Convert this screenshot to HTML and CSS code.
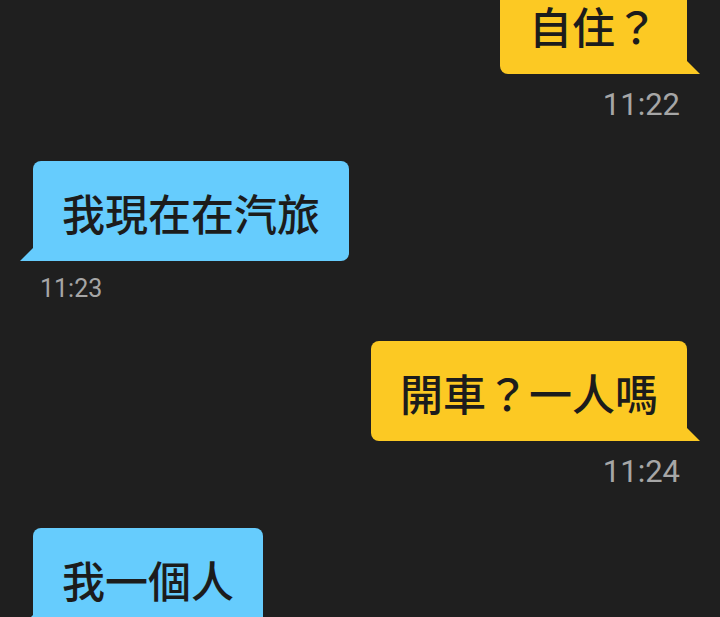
FILE: index.html
```html
<!DOCTYPE html>
<html lang="zh-Hant">
<head>
  <meta charset="UTF-8" />
  <meta name="viewport" content="width=device-width, initial-scale=1.0"/>
  <title>聊天</title>
  <link rel="stylesheet" href="styles.css">
</head>
<body>
  <div class="chat">
    <div class="msg me">
      <div class="bubble">自住？</div>
      <div class="time">11:22</div>
    </div>
    <div class="msg them">
      <div class="bubble">我現在在汽旅</div>
      <div class="time">11:23</div>
    </div>
    <div class="msg me">
      <div class="bubble">開車？一人嗎</div>
      <div class="time">11:24</div>
    </div>
    <div class="msg them">
      <div class="bubble">我一個人</div>
    </div>
  </div>
</body>
</html>
```

FILE: styles.css
```css
html, body { margin: 0; background: #1f1f1f; }
body { height: 617px; overflow: hidden; }

.chat {
  display: flex;
  flex-direction: column;
  padding: 0 33px;
  margin-top: -26px;
}

.msg { display: flex; flex-direction: column; margin-bottom: 41px; }
.msg.me { align-items: flex-end; }
.msg.them { align-items: flex-start; margin-bottom: 40px; }

.bubble {
  position: relative;
  font-family: "Noto Sans CJK TC", "Noto Sans", sans-serif;
  font-size: 43px;
  font-weight: 500;
  line-height: 43px;
  color: #1c1c1c;
  padding: 30px 29px 27px;
  border-radius: 8px;
}
.me .bubble { background: #fcc923; border-bottom-right-radius: 0; }
.them .bubble { background: #66ccfd; border-bottom-left-radius: 0; }

/* tails */
.bubble::after {
  content: "";
  position: absolute;
  bottom: 0;
  width: 13px;
  height: 13px;
}
.me .bubble::after {
  right: -13px;
  background: #fcc923;
  clip-path: polygon(0 0, 100% 100%, 0 100%);
}
.them .bubble::after {
  left: -13px;
  background: #66ccfd;
  clip-path: polygon(100% 0, 100% 100%, 0 100%);
}

.time {
  font-family: Roboto, "Noto Sans", sans-serif;
  color: #a6a6a6;
  line-height: 1;
}
.me .time { font-size: 31px; margin: 15px 7px 0 0; }
.them .time { font-size: 25px; margin: 15px 0 0 7px; }
```
